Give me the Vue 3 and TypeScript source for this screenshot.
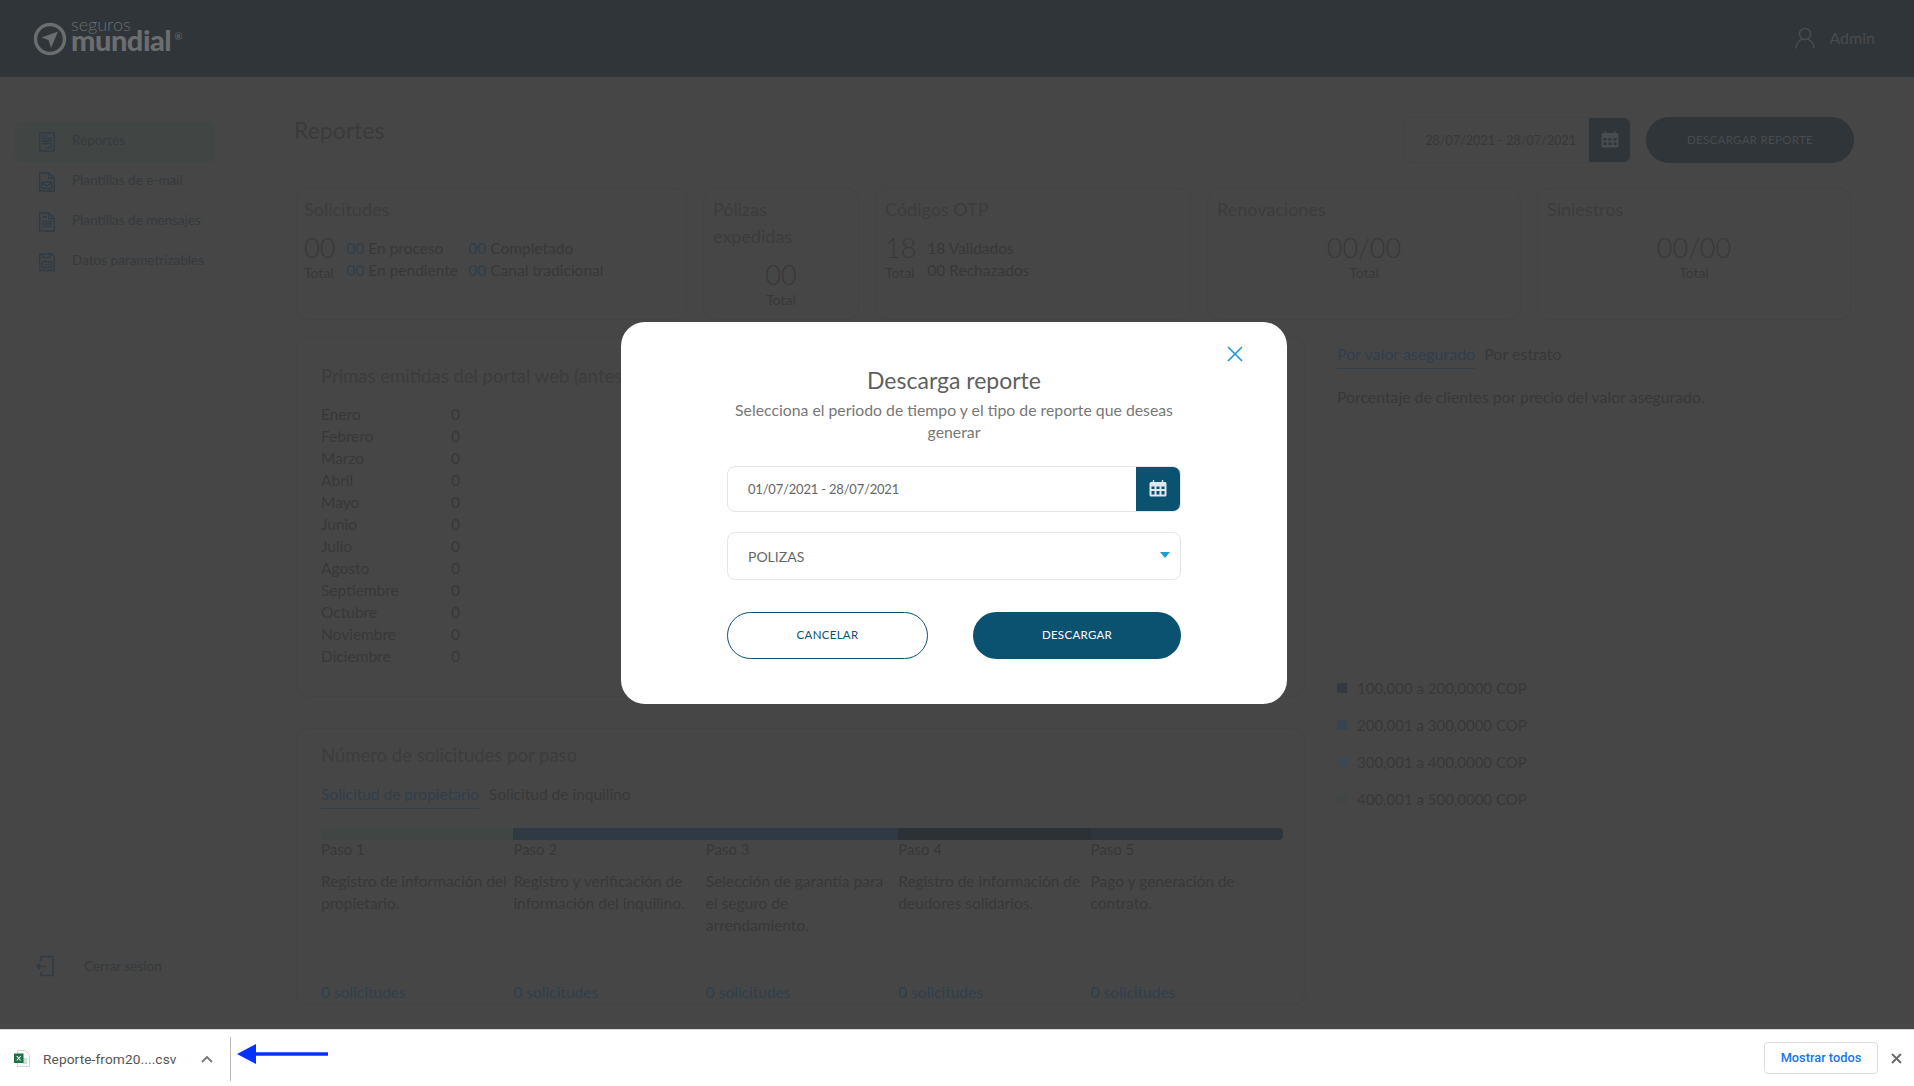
<script setup lang="ts">
const menu = [
  { label: 'Reportes', icon: 'report', active: true },
  { label: 'Plantillas de e-mail', icon: 'mail', active: false },
  { label: 'Plantillas de mensajes', icon: 'text', active: false },
  { label: 'Datos parametrizables', icon: 'disk', active: false },
];

const months = [
  'Enero', 'Febrero', 'Marzo', 'Abril', 'Mayo', 'Junio',
  'Julio', 'Agosto', 'Septiembre', 'Octubre', 'Noviembre', 'Diciembre',
];

const steps = [
  { name: 'Paso 1', text: 'Registro de información del propietario.', color: '#3f4643' },
  { name: 'Paso 2', text: 'Registro y verificación de información del inquilino.', color: '#2f3a44' },
  { name: 'Paso 3', text: 'Selección de garantía para el seguro de\narrendamiento.', color: '#2f3a44' },
  { name: 'Paso 4', text: 'Registro de información de deudores solidarios.', color: '#2c3135' },
  { name: 'Paso 5', text: 'Pago y generación de contrato.', color: '#2f363b' },
];

const legend = [
  { label: '100,000 a 200,0000 COP', color: '#33393e' },
  { label: '200,001 a 300,0000 COP', color: '#36444f' },
  { label: '300,001 a 400,0000 COP', color: '#3b4852' },
  { label: '400,001 a 500,0000 COP', color: '#414644' },
];
</script>

<template>
  <div class="screen">
    <div class="app">
      <header class="topbar">
        <div class="logo">
          <svg class="logo-mark" width="34" height="34" viewBox="0 0 34 34">
            <circle cx="17" cy="17" r="14.5" fill="none" stroke="#6b6d6e" stroke-width="3.4" />
            <path d="M25 9.5 L8.5 15.5 L15.5 18 L18 26 Z" fill="#6b6d6e" />
          </svg>
          <div class="logo-words">
            <span class="logo-small">seguros</span>
            <span class="logo-big">mundial<sup>®</sup></span>
          </div>
        </div>
        <div class="user">
          <svg width="20" height="22" viewBox="0 0 20 22" fill="none" stroke="#474c4f" stroke-width="1.5">
            <circle cx="10" cy="7" r="5.6" />
            <path d="M1 21.5c0-5.2 3.4-8.6 6-9.3M19 21.5c0-5.2-3.4-8.6-6-9.3" />
          </svg>
          <span>Admin</span>
        </div>
      </header>

      <div class="body">
        <aside class="sidebar">
          <nav class="menu">
            <a v-for="item in menu" :key="item.label" class="menu-item" :class="{ active: item.active }">
              <svg width="18" height="20" viewBox="0 0 18 20" fill="none" stroke="#313b44" stroke-width="1.4">
                <template v-if="item.icon === 'report'">
                  <path d="M1.7 1h14.6v18H1.700z" />
                  <path d="M4 4h5M4 6.500h10M4 9h10M4 11.500h10" />
                  <path d="M8 17v-1.500M10.500 17v-2.500M13 17v-4" />
                </template>
                <template v-else-if="item.icon === 'mail'">
                  <path d="M11 1H1.700v18h14.600V6.500z" />
                  <path d="M11 1v5.500h5.300" />
                  <rect x="4" y="10" width="10" height="6.500" rx="1.500" />
                  <path d="M4.500 11l4.500 3 4.500-3" />
                </template>
                <template v-else-if="item.icon === 'text'">
                  <path d="M11 1H1.700v18h14.600V6.500z" />
                  <path d="M11 1v5.500h5.300" />
                  <path d="M4 5h5M4 9.500h10M4 12h10M4 14.500h10" />
                </template>
                <template v-else>
                  <path d="M1.700 2h12l2.600 2.600V18.500H1.700z" />
                  <path d="M5 2v3.500h7V2" />
                  <rect x="4.300" y="9.500" width="9.400" height="6" rx="1.200" />
                  <path d="M6.500 12.500h5" />
                </template>
              </svg>
              <span>{{ item.label }}</span>
            </a>
          </nav>
          <a class="logout">
            <svg width="18" height="22" viewBox="0 0 18 22" fill="none" stroke="#313b44" stroke-width="1.500">
              <path d="M5 6V1.500h12v19H5V17" />
              <path d="M1 11.500h9" />
              <path d="M4 9l-3 2.500 3 2.500" fill="#313b44" />
            </svg>
            <span>Cerrar sesion</span>
          </a>
        </aside>

        <main class="content">
          <div class="title-row">
            <h1>Reportes</h1>
            <div class="title-tools">
              <div class="date-box">
                <span class="date-text">28/07/2021 - 28/07/2021</span>
                <span class="date-btn">
                  <svg width="18" height="18" viewBox="0 0 18 18">
                    <path d="M2 3h14a1.500 1.500 0 0 1 1.500 1.500V16a1.500 1.500 0 0 1-1.500 1.500H2A1.500 1.500 0 0 1 .5 16V4.500A1.500 1.500 0 0 1 2 3z" fill="#474c4f" />
                    <path d="M4.500 1v3M13.500 1v3" stroke="#474c4f" stroke-width="1.400" />
                    <path d="M2.500 8h3v2.500h-3zM7.500 8h3v2.500h-3zM12.500 8h3v2.500h-3zM2.500 12.500h3V15h-3zM7.500 12.500h3V15h-3zM12.500 12.500h3V15h-3z" fill="#2f3539" />
                  </svg>
                </span>
              </div>
              <button class="report-btn">DESCARGAR REPORTE</button>
            </div>
          </div>

          <section class="stats">
            <div class="card stat first">
              <h3>Solicitudes</h3>
              <div class="stat-body">
                <div class="stat-total">
                  <strong>00</strong>
                  <small>Total</small>
                </div>
                <div class="stat-cols">
                  <span><b>00</b> En proceso</span>
                  <span><b>00</b> Completado</span>
                  <span><b>00</b> En pendiente</span>
                  <span><b>00</b> Canal tradicional</span>
                </div>
              </div>
            </div>
            <div class="card stat">
              <h3>Pólizas expedidas</h3>
              <div class="stat-total centered">
                <strong>00</strong>
                <small>Total</small>
              </div>
            </div>
            <div class="card stat">
              <h3>Códigos OTP</h3>
              <div class="stat-body">
                <div class="stat-total">
                  <strong>18</strong>
                  <small>Total</small>
                </div>
                <div class="stat-list">
                  <span>18 Validados</span>
                  <span>00 Rechazados</span>
                </div>
              </div>
            </div>
            <div class="card stat">
              <h3>Renovaciones</h3>
              <div class="stat-total centered">
                <strong>00/00</strong>
                <small>Total</small>
              </div>
            </div>
            <div class="card stat">
              <h3>Siniestros</h3>
              <div class="stat-total centered">
                <strong>00/00</strong>
                <small>Total</small>
              </div>
            </div>
          </section>

          <section class="panels">
            <div class="left-col">
              <div class="card premiums">
                <h2>Primas emitidas del portal web (antes de IVA)</h2>
                <div v-for="month in months" :key="month" class="month-row">
                  <span>{{ month }}</span>
                  <span>0</span>
                </div>
              </div>

              <div class="card steps-card">
                <h2>Número de solicitudes por paso</h2>
                <div class="tabs steps-tabs">
                  <span class="tab on">Solicitud de propietario</span>
                  <span class="tab">Solicitud de inquilino</span>
                </div>
                <div class="steps">
                  <div v-for="step in steps" :key="step.name" class="step">
                    <div class="step-bar" :style="{ background: step.color }" />
                    <span class="step-name">{{ step.name }}</span>
                    <p>{{ step.text }}</p>
                    <span class="step-count">0 solicitudes</span>
                  </div>
                </div>
              </div>
            </div>

            <div class="card clients">
              <div class="tabs">
                <span class="tab on">Por valor asegurado</span>
                <span class="tab">Por estrato</span>
              </div>
              <p class="clients-note">Porcentaje de clientes por precio del valor asegurado.</p>
              <ul class="legend">
                <li v-for="entry in legend" :key="entry.label">
                  <i :style="{ background: entry.color }" />
                  {{ entry.label }}
                </li>
              </ul>
            </div>
          </section>
        </main>
      </div>

      <div class="backdrop">
        <div class="modal">
          <button class="modal-close" aria-label="Cerrar">
            <svg width="16" height="16" viewBox="0 0 16 16" stroke="#1f9ad6" stroke-width="1.700" fill="none">
              <path d="M1 1l14 14M15 1L1 15" />
            </svg>
          </button>
          <h2>Descarga reporte</h2>
          <p>Selecciona el periodo de tiempo y el tipo de reporte que deseas generar</p>
          <div class="field date-field">
            <span>01/07/2021 - 28/07/2021</span>
            <span class="field-btn">
              <svg width="18" height="18" viewBox="0 0 18 18">
                <path d="M2 3h14a1.500 1.500 0 0 1 1.500 1.500V16a1.500 1.500 0 0 1-1.500 1.500H2A1.500 1.500 0 0 1 .5 16V4.500A1.500 1.500 0 0 1 2 3z" fill="#dfe8ed" />
                <path d="M4.500 1v3M13.500 1v3" stroke="#dfe8ed" stroke-width="1.400" />
                <path d="M2.500 7.500h3V10h-3zM7.500 7.500h3V10h-3zM12.500 7.500h3V10h-3zM2.500 12h3v3.500h-3zM7.500 12h3v3.500h-3zM12.500 12h3v3.500h-3z" fill="#0b5170" />
              </svg>
            </span>
          </div>
          <div class="field select-field">
            <span>POLIZAS</span>
            <i class="caret" />
          </div>
          <div class="modal-actions">
            <button class="btn-outline">CANCELAR</button>
            <button class="btn-solid">DESCARGAR</button>
          </div>
        </div>
      </div>
    </div>

    <footer class="downloads">
      <div class="file">
        <svg width="16" height="17" viewBox="0 0 16 17">
          <path d="M3.500 .5h8l4 4v12h-12z" fill="#fafafa" stroke="#c9c9c9" stroke-width=".8" />
          <path d="M9 9h4M9 11h4M9 13h4" stroke="#8fbfa3" stroke-width=".9" />
          <rect x="0" y="3.500" width="9.500" height="9.500" fill="#1e7145" />
          <path d="M2.700 6l4 4.500M6.700 6l-4 4.500" stroke="#fff" stroke-width="1.100" />
        </svg>
        <span>Reporte-from20....csv</span>
        <svg class="chevron" width="12" height="8" viewBox="0 0 12 8" fill="none" stroke="#757575" stroke-width="1.800">
          <path d="M1 7l5-5 5 5" />
        </svg>
      </div>
      <div class="divider" />
      <svg class="arrow" width="91" height="20" viewBox="0 0 91 20">
        <path d="M0 10 L19 0 V8.300 H91 V11.700 H19 V20 Z" fill="#0433ff" />
      </svg>
      <button class="show-all">Mostrar todos</button>
      <svg class="bar-close" width="11" height="11" viewBox="0 0 11 11" stroke="#6b6b6b" stroke-width="2" fill="none">
        <path d="M1 1l9 9M10 1l-9 9" />
      </svg>
    </footer>
  </div>
</template>

<style scoped>
* {
  box-sizing: border-box;
}
.screen {
  width: 1914px;
  height: 1086px;
  overflow: hidden;
  display: flex;
  flex-direction: column;
  font-family: Lato, "Open Sans", sans-serif;
  color: #383838;
  background: #fff;
}
.app {
  position: relative;
  height: 1029px;
  flex: none;
  display: flex;
  flex-direction: column;
  background: #464646;
  overflow: hidden;
}
.topbar {
  height: 77px;
  flex: none;
  background: #2f3539;
  display: flex;
  align-items: center;
  justify-content: space-between;
  padding: 0 39px 0 33px;
}
.logo {
  display: flex;
  align-items: center;
  gap: 4px;
}
.logo-words {
  display: flex;
  flex-direction: column;
  color: #6b6d6e;
  margin-top: -9px;
}
.logo-small {
  font-size: 18px;
  font-weight: 300;
  line-height: 15px;
}
.logo-big {
  font-size: 29px;
  font-weight: 900;
  line-height: 22px;
  letter-spacing: -0.5px;
  margin-top: -3px;
}
.logo-big sup {
  font-size: 10px;
  font-weight: 400;
  vertical-align: 11px;
  line-height: 0;
  margin-left: 3px;
}
.user {
  display: flex;
  align-items: center;
  gap: 14px;
  font-size: 16px;
  color: #474c4f;
  margin-top: -2px;
}
.body {
  flex: 1;
  min-height: 0;
  display: flex;
}
.sidebar {
  width: 293px;
  flex: none;
  display: flex;
  flex-direction: column;
  padding: 45px 0 52px 15px;
}
.menu {
  display: flex;
  flex-direction: column;
}
.menu-item {
  width: 200px;
  height: 40px;
  display: flex;
  align-items: center;
  gap: 16px;
  padding-left: 23px;
  font-size: 13.5px;
  color: #353a3d;
  border-radius: 5px;
}
.menu-item span {
  margin-top: -4px;
}
.menu-item.active {
  background: #414644;
}
.logout {
  margin-top: auto;
  display: flex;
  align-items: center;
  gap: 30px;
  padding-left: 21px;
  font-size: 13.500px;
  color: #353a3d;
}
.content {
  flex: 1;
  min-width: 0;
  padding: 40px 60px 0 3px;
}
.title-row {
  height: 46px;
  display: flex;
  justify-content: space-between;
  align-items: flex-start;
  margin-bottom: 25px;
}
h1 {
  margin: -1px 0 0 -2px;
  font-size: 23px;
  font-weight: 400;
  line-height: 28px;
  color: #3a3a3a;
}
.title-tools {
  display: flex;
  gap: 15px;
}
.date-box {
  width: 228px;
  height: 46px;
  display: flex;
  align-items: center;
  justify-content: space-between;
  padding-left: 21px;
  border: 1px solid #434343;
  border-radius: 8px;
  font-size: 13px;
  letter-spacing: -0.2px;
  white-space: nowrap;
  overflow: hidden;
}
.date-btn {
  width: 41px;
  height: 46px;
  background: #2f3539;
  display: flex;
  align-items: center;
  justify-content: center;
}
.date-btn svg {
  margin-top: -2px;
}
.report-btn {
  width: 208px;
  height: 46px;
  padding: 0 0 2px;
  border: 0;
  border-radius: 23px;
  background: #2f3539;
  color: #474c4f;
  font: 400 11.500px Lato, sans-serif;
  letter-spacing: 0.3px;
}
.card {
  border: 1px solid #434343;
  border-radius: 12px;
}
.stats {
  display: grid;
  grid-template-columns: 391px 156px 316px 314px 314px;
  column-gap: 16px;
  height: 132px;
  margin-bottom: 17px;
}
.stat {
  padding: 7px 9px;
}
.stat.first {
  padding-left: 7px;
}
h3 {
  margin: 0;
  font-size: 18px;
  font-weight: 400;
  line-height: 27px;
  color: #3c3c3c;
}
.stat-body {
  display: flex;
  gap: 11px;
  margin-top: 10px;
}
.stat-total {
  display: flex;
  flex-direction: column;
}
.stat-total strong {
  font-size: 27px;
  font-weight: 300;
  line-height: 30px;
}
.stat-total small {
  font-size: 14px;
  line-height: 20px;
}
.stat-total.centered {
  align-items: center;
  margin-top: 10px;
}
.stat-cols {
  display: grid;
  grid-template-columns: 122px auto;
  grid-auto-rows: 22px;
  margin-top: 4px;
  font-size: 15.500px;
  line-height: 22px;
}
.stat-cols b {
  font-weight: 400;
  color: #2f3f4c;
}
.stat-list {
  display: flex;
  flex-direction: column;
  margin-top: 4px;
  font-size: 15.500px;
  line-height: 22px;
}
.panels {
  display: grid;
  grid-template-columns: 1009px 522px;
  column-gap: 26px;
}
.left-col {
  display: flex;
  flex-direction: column;
  gap: 31px;
}
h2 {
  margin: 0;
  font-size: 18.500px;
  font-weight: 400;
  line-height: 26px;
  color: #3c3c3c;
}
.premiums {
  height: 360px;
  padding: 25px 24px;
}
.premiums h2 {
  margin-bottom: 14px;
}
.month-row {
  display: grid;
  grid-template-columns: 130px auto;
  height: 22px;
  font-size: 15.500px;
  line-height: 22px;
}
.steps-card {
  height: 277px;
  padding: 13px 24px 0;
}
.tabs {
  display: flex;
  gap: 10px;
  font-size: 15.500px;
  line-height: 22px;
}
.steps-tabs {
  margin-top: 15px;
}
.tab {
  padding-bottom: 3px;
}
.tab.on {
  color: #2f3f4c;
  border-bottom: 1px solid #2f3f4c;
}
.steps {
  display: grid;
  grid-template-columns: repeat(5, 192.4px);
  margin-top: 19px;
}
.step-bar {
  height: 12px;
}
.step:last-child .step-bar {
  border-radius: 0 4px 4px 0;
}
.step-name {
  display: block;
  font-size: 15px;
  line-height: 20px;
  margin-top: -1px;
}
.step p {
  margin: 11px 0 0;
  height: 66px;
  font-size: 15.500px;
  line-height: 22px;
  padding-right: 2px;
  white-space: pre-line;
}
.step-count {
  display: block;
  margin-top: 45px;
  font-size: 15.500px;
  line-height: 22px;
  color: #2f3f4c;
}
.clients {
  border-color: transparent;
  padding: 5px 5px;
}
.clients .tabs {
  width: max-content;
  font-size: 16px;
  gap: 9px;
}
.clients-note {
  margin: 17px 0 0;
  font-size: 15.800px;
  line-height: 22px;
}
.legend {
  list-style: none;
  margin: 261px 0 0;
  padding: 0;
  display: flex;
  flex-direction: column;
  font-size: 15px;
}
.legend li {
  height: 37px;
  display: flex;
  align-items: center;
  gap: 10px;
}
.legend i {
  width: 10px;
  height: 10px;
}
.backdrop {
  position: absolute;
  inset: 0;
  display: flex;
  align-items: center;
  justify-content: center;
  padding: 0 6px 3px 0;
}
.modal {
  position: relative;
  width: 666px;
  height: 382px;
  padding: 44px 106px 0;
  background: #fff;
  border-radius: 24px;
  text-align: center;
  color: #666;
}
.modal h2 {
  font-size: 23px;
  line-height: 28px;
  color: #5f5f5f;
}
.modal p {
  margin: 5px 0 0;
  font-size: 15.800px;
  line-height: 22px;
  color: #777;
}
.modal-close {
  position: absolute;
  top: 24px;
  right: 44px;
  padding: 0;
  border: 0;
  background: none;
  display: flex;
}
.field {
  height: 46px;
  border: 1px solid #e6e6e6;
  border-radius: 8px;
  display: flex;
  align-items: center;
  justify-content: space-between;
  padding-left: 20px;
  font-size: 14px;
  color: #666;
}
.date-field {
  margin-top: 23px;
  overflow: hidden;
  font-size: 13px;
  letter-spacing: -0.2px;
}
.field-btn {
  width: 45px;
  height: 46px;
  margin: 0 -1px 0 0;
  background: #0b5170;
  display: flex;
  align-items: center;
  justify-content: center;
}
.field-btn svg {
  margin: -3px 2px 0 0;
}
.select-field {
  height: 48px;
  margin-top: 20px;
  padding-right: 10px;
}
.caret {
  width: 0;
  height: 0;
  margin-top: -3px;
  border-left: 5px solid transparent;
  border-right: 5px solid transparent;
  border-top: 6px solid #1f9ad6;
}
.modal-actions {
  display: flex;
  justify-content: space-between;
  margin-top: 32px;
}
.modal-actions button {
  height: 47px;
  padding: 0 0 2px;
  border-radius: 24px;
  font: 400 11.500px Lato, sans-serif;
  letter-spacing: 0.3px;
}
.btn-outline {
  width: 201px;
  background: #fff;
  border: 1px solid #0b5170;
  color: #0b5170;
}
.btn-solid {
  width: 208px;
  background: #0b5170;
  border: 0;
  color: #fff;
}
.downloads {
  flex: 1;
  display: flex;
  align-items: center;
  border-top: 1px solid #d8d8d8;
  padding-left: 14px;
  font-family: Roboto, "Liberation Sans", sans-serif;
  background: #fff;
}
.file {
  display: flex;
  align-items: center;
  font-size: 13.700px;
  color: #555;
  width: 216px;
  margin-top: 1px;
}
.file span {
  margin-left: 13px;
  letter-spacing: 0.1px;
}
.chevron {
  margin-left: 24px;
}
.divider {
  width: 1px;
  height: 44px;
  background: #bdbdbd;
  margin-top: 1px;
}
.arrow {
  margin: -9px 0 0 6px;
}
.show-all {
  margin-left: auto;
  width: 114px;
  height: 32px;
  border: 1px solid #dadce0;
  border-radius: 4px;
  background: #fff;
  color: #1a73e8;
  font: 500 12.800px Roboto, "Liberation Sans", sans-serif;
  margin-top: -1px;
}
.bar-close {
  margin: 0 12px 0 13px;
}
</style>
